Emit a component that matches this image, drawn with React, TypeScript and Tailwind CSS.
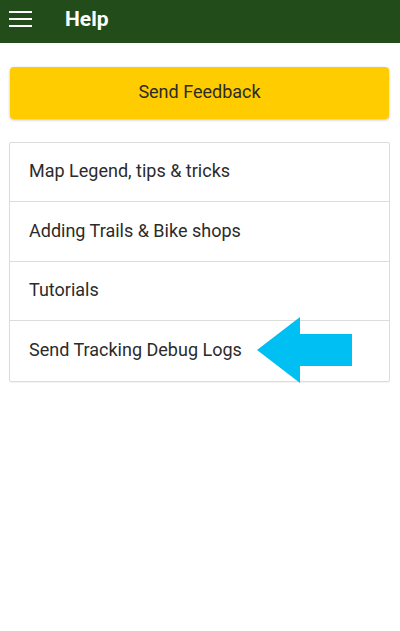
import React from "react";

const items = [
  "Map Legend, tips & tricks",
  "Adding Trails & Bike shops",
  "Tutorials",
  "Send Tracking Debug Logs",
];

export default function App() {
  return (
    <div className="w-[400px] h-[631px] bg-white relative" style={{ fontFamily: "Roboto, 'Noto Sans', sans-serif" }}>
      <div className="h-[43px] bg-[#224c1a] flex items-center pb-[5px]">
        <div className="ml-[9px] w-[23px] flex flex-col gap-[5px]">
          <div className="h-[2px] bg-white" />
          <div className="h-[2px] bg-white" />
          <div className="h-[2px] bg-white" />
        </div>
        <div className="ml-[33px] text-white text-[21px] font-bold leading-none">Help</div>
      </div>
      <div className="px-[10px] pt-[24px]">
        <div className="mr-[1px] h-[52px] pb-[3px] bg-[#ffcc00] rounded-[4px] shadow-[0_1px_3px_rgba(0,0,0,0.25)] flex items-center justify-center text-[18px] text-[#2b2b2b]">
          Send Feedback
        </div>
      </div>
      <div className="ml-[9px] mr-[10px] mt-[23px] border border-[#dcdcdc] rounded-[2px] shadow-[0_1px_1px_rgba(0,0,0,0.05)]">
        {items.map((t, i) => (
          <div
            key={t}
            className={`flex items-center pl-[19px] pb-[3px] text-[18px] text-[#2b2b2b] ${i % 2 === 0 ? "h-[59px]" : "h-[60px]"} ${i < items.length - 1 ? "border-b border-[#dcdcdc]" : ""}`}
          >
            {t}
          </div>
        ))}
      </div>
      <svg className="absolute left-0 top-0" width="400" height="631" viewBox="0 0 400 631">
        <polygon points="257,350 300,317 300,334 352,334 352,366 300,366 300,383" fill="#00bff3" />
      </svg>
    </div>
  );
}
